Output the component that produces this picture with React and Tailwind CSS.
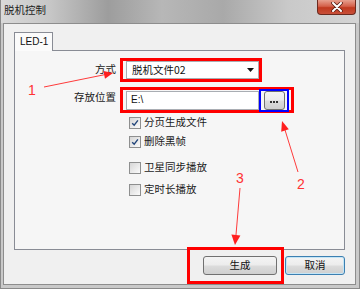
import React from "react";

/* ------------------------------ small pieces ------------------------------ */

const cjk = "font-['Noto_Sans_CJK_SC','Noto_Sans',sans-serif]";

function CheckBox({ checked, label }) {
  return (
    <div className="flex items-center h-[19px]">
      <div className="w-[12px] h-[12px] border border-[#8e8f8f] bg-[linear-gradient(135deg,#d6d6d6,#fbfbfb)] p-[1px] flex items-center justify-center">
        {checked && (
          <svg width="10" height="10" viewBox="0 0 10 10">
            <path d="M1.5 5.2 L4 7.8 L8.6 1.8" fill="none" stroke="#21457a" strokeWidth="1.7" />
          </svg>
        )}
      </div>
      <span className={`ml-[3px] text-[10.5px] leading-none text-[#1a1a1a] ${cjk}`}>{label}</span>
    </div>
  );
}

function WinButton({ children, className = "" }) {
  return (
    <button
      type="button"
      className={`h-[19px] rounded-[3px] border text-[10.5px] leading-none text-[#111] bg-[linear-gradient(#f4f4f4_0%,#ececec_48%,#dcdcdc_52%,#cfcfcf_100%)] flex items-center justify-center ${cjk} ${className}`}
    >
      {children}
    </button>
  );
}

/* ---------------------------------- App ---------------------------------- */

export default function App() {
  return (
    <div className="relative w-[360px] h-[289px] overflow-hidden bg-[#c9c9c9] border-x border-b border-[#8a8a8a] font-['Liberation_Sans',sans-serif]">
      {/* title bar */}
      <div className="h-[23px] -mx-px flex items-start justify-between bg-[linear-gradient(to_right,#dadada_0%,#c6c6c6_14%,#9d9d9d_30%,#b7b7b7_45%,#a9a9a9_62%,#c9c9c9_80%,#d5d5d5_100%)]">
        <span className={`ml-[4px] mt-[5px] text-[10.5px] leading-none text-[#1e1e1e] ${cjk}`}>脱机控制</span>
        <div className="mr-[4px] w-[39px] h-[15px] rounded-b-[4px] border border-t-0 border-[#6b2a1f] bg-[linear-gradient(#e7a08f_0%,#d4604a_45%,#c0391f_55%,#c8503a_100%)] flex items-center justify-center">
          <svg width="12" height="10" viewBox="0 0 12 10">
            <path d="M2 1 L10 9 M10 1 L2 9" stroke="#5a1e14" strokeWidth="3.6" strokeLinecap="round" />
            <path d="M2 1 L10 9 M10 1 L2 9" stroke="#fff" strokeWidth="2" strokeLinecap="round" />
          </svg>
        </div>
      </div>

      {/* client area */}
      <div className="ml-[2px] w-[353px] h-[262px] border border-[#8d8d8d] bg-[#f0f0f0] pt-[8px] pl-[10px]">
        {/* tab header */}
        <div className="relative z-10 -mb-px w-[39px] h-[19px] border border-b-0 border-[#898c95] bg-[#fbfbfb] pl-[5px] pt-[4px] text-[10px] leading-none text-[#111]">
          LED-1
        </div>

        {/* tab panel */}
        <div className="w-[331px] h-[200px] border border-[#898c95] bg-[#f6f6f6] pt-[7px]">
          {/* 方式 */}
          <div className="flex items-start">
            <div className={`w-[101px] pt-[6px] text-right text-[10.5px] leading-none text-[#1a1a1a] ${cjk}`}>方式</div>
            <div className="ml-[4px] w-[142px] h-[24px] border-[3px] border-[#ff0000] flex items-center">
              <div className="ml-[3px] w-[133px] h-[18px] border border-[#a9adb3] bg-white flex items-center justify-between pl-[5px] pr-[4px]">
                <span className={`text-[10.5px] leading-none text-[#111] ${cjk}`}>脱机文件02</span>
                <svg width="7" height="4" viewBox="0 0 7 4">
                  <path d="M0 0 H7 L3.5 4 Z" fill="#111" />
                </svg>
              </div>
            </div>
          </div>

          {/* 存放位置 */}
          <div className="flex items-start mt-[5px]">
            <div className={`w-[101px] pt-[5px] text-right text-[10.5px] leading-none text-[#1a1a1a] ${cjk}`}>存放位置</div>
            <div className="ml-[4px] w-[174px] h-[26px] border-[3px] border-[#ff0000] flex items-center">
              <div className="ml-[3px] w-[133px] h-[19px] border border-[#a9adb3] bg-white flex items-center pl-[4px]">
                <span className="text-[10px] leading-none text-[#111]">E:\</span>
              </div>
              <div className="w-[30px] h-[23px] border-2 border-[#0000ff] flex items-center justify-center">
                <WinButton className="w-[21px] h-[17px] border-[#707070] rounded-[2px]">
                  <span className="flex gap-[1px] mt-[3px]">
                    <span className="w-[2px] h-[2px] bg-[#333]" />
                    <span className="w-[2px] h-[2px] bg-[#333]" />
                    <span className="w-[2px] h-[2px] bg-[#333]" />
                  </span>
                </WinButton>
              </div>
            </div>
          </div>

          {/* options */}
          <div className="ml-[114px]">
            <CheckBox checked label="分页生成文件" />
            <CheckBox checked label="删除黑帧" />
            <div className="mt-[7px]">
              <CheckBox label="卫星同步播放" />
            </div>
            <div className="mt-[3px]">
              <CheckBox label="定时长播放" />
            </div>
          </div>
        </div>

        {/* buttons */}
        <div className="mt-[6px] w-[331px] flex justify-end gap-[8px]">
          <div className="relative">
            <WinButton className="w-[74px] border-[#707070]">生成</WinButton>
            <div className="absolute left-[-16px] top-[-9px] w-[97px] h-[37px] border-[3px] border-[#ff0000]" />
          </div>
          <WinButton className="w-[60px] border-[#3c7fb1] shadow-[inset_0_0_0_1px_#c4e5f6]">取消</WinButton>
        </div>
      </div>

      {/* annotations */}
      <svg className="absolute inset-0 pointer-events-none" width="360" height="289" viewBox="0 0 360 289">
        <g stroke="#ff3b3b" strokeWidth="1" fill="#ff1f1f">
          <line x1="43" y1="87" x2="104" y2="74.6" />
          <polygon points="112,73 104,78.7 102.4,70.9" stroke="none" />
          <line x1="297" y1="172" x2="284" y2="130" />
          <polygon points="281,121 287.8,129.3 280.2,131.7" stroke="none" />
          <line x1="239" y1="188" x2="234.9" y2="236" />
          <polygon points="234,245 239.4,235.4 230.4,234.6" stroke="none" />
        </g>
      </svg>
      <span className="absolute left-[27px] top-[83px] text-[14px] leading-none text-[#ff3333]">1</span>
      <span className="absolute left-[296px] top-[177px] text-[14px] leading-none text-[#ff3333]">2</span>
      <span className="absolute left-[235px] top-[171px] text-[14px] leading-none text-[#ff3333]">3</span>
    </div>
  );
}
